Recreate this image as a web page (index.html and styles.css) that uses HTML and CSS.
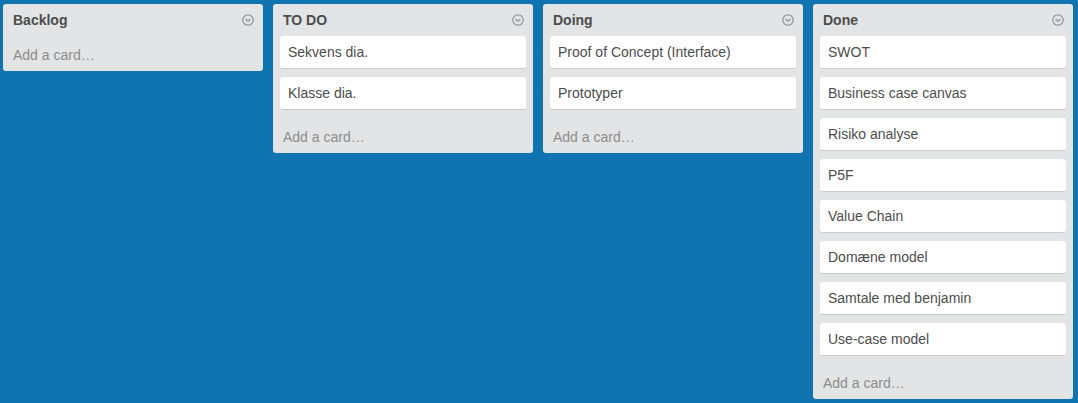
FILE: index.html
```html
<!DOCTYPE html>
<html>
<head>
<meta charset="utf-8">
<link rel="stylesheet" href="styles.css">
</head>
<body>
<div class="board">
  <div class="list">
    <div class="list-header"><h2>Backlog</h2><span class="menu"><svg width="12" height="12" viewBox="0 0 12 12"><circle cx="6" cy="6" r="5.2" fill="none" stroke="#999" stroke-width="1.3"/><path d="M3.6 5 L6 7.3 L8.4 5" fill="none" stroke="#999" stroke-width="1.3"/></svg></span></div>
    <div class="add">Add a card…</div>
  </div>
  <div class="list">
    <div class="list-header"><h2>TO DO</h2><span class="menu"><svg width="12" height="12" viewBox="0 0 12 12"><circle cx="6" cy="6" r="5.2" fill="none" stroke="#999" stroke-width="1.3"/><path d="M3.6 5 L6 7.3 L8.4 5" fill="none" stroke="#999" stroke-width="1.3"/></svg></span></div>
    <div class="cards">
      <div class="card">Sekvens dia.</div>
      <div class="card">Klasse dia.</div>
    </div>
    <div class="add">Add a card…</div>
  </div>
  <div class="list">
    <div class="list-header"><h2>Doing</h2><span class="menu"><svg width="12" height="12" viewBox="0 0 12 12"><circle cx="6" cy="6" r="5.2" fill="none" stroke="#999" stroke-width="1.3"/><path d="M3.6 5 L6 7.3 L8.4 5" fill="none" stroke="#999" stroke-width="1.3"/></svg></span></div>
    <div class="cards">
      <div class="card">Proof of Concept (Interface)</div>
      <div class="card">Prototyper</div>
    </div>
    <div class="add">Add a card…</div>
  </div>
  <div class="list">
    <div class="list-header"><h2>Done</h2><span class="menu"><svg width="12" height="12" viewBox="0 0 12 12"><circle cx="6" cy="6" r="5.2" fill="none" stroke="#999" stroke-width="1.3"/><path d="M3.6 5 L6 7.3 L8.4 5" fill="none" stroke="#999" stroke-width="1.3"/></svg></span></div>
    <div class="cards">
      <div class="card">SWOT</div>
      <div class="card">Business case canvas</div>
      <div class="card">Risiko analyse</div>
      <div class="card">P5F</div>
      <div class="card">Value Chain</div>
      <div class="card">Domæne model</div>
      <div class="card">Samtale med benjamin</div>
      <div class="card">Use-case model</div>
    </div>
    <div class="add">Add a card…</div>
  </div>
</div>
</body>
</html>
```

FILE: styles.css
```css
html, body {
  margin: 0;
  padding: 0;
  height: 100%;
}
body {
  background: #0f74b0;
  font-family: "Liberation Sans", Arial, sans-serif;
  font-size: 14px;
  color: #4d4d4d;
  overflow: hidden;
}
.board {
  display: flex;
  align-items: flex-start;
  gap: 10px;
  padding: 4px 0 0 3px;
}
.list {
  width: 260px;
  flex: none;
  background: #e2e4e6;
  border-radius: 3px;
}
.list-header {
  display: flex;
  align-items: center;
  justify-content: space-between;
  padding: 7px 9px 7px 10px;
}
.list-header h2 {
  margin: 0;
  font-size: 14px;
  line-height: 18px;
  font-weight: bold;
  color: #4d4d4d;
}
.menu {
  display: flex;
  width: 12px;
  height: 12px;
}
.cards {
  display: flex;
  flex-direction: column;
  gap: 8px;
  padding: 0 7px 8px;
}
.card {
  background: #fff;
  border-radius: 3px;
  border-bottom: 1px solid #c9cbcd;
  padding: 7px 8px;
  line-height: 18px;
  color: #4d4d4d;
}
.add {
  padding: 10px 10px 7px;
  line-height: 18px;
  color: #8c8c8c;
}
```
